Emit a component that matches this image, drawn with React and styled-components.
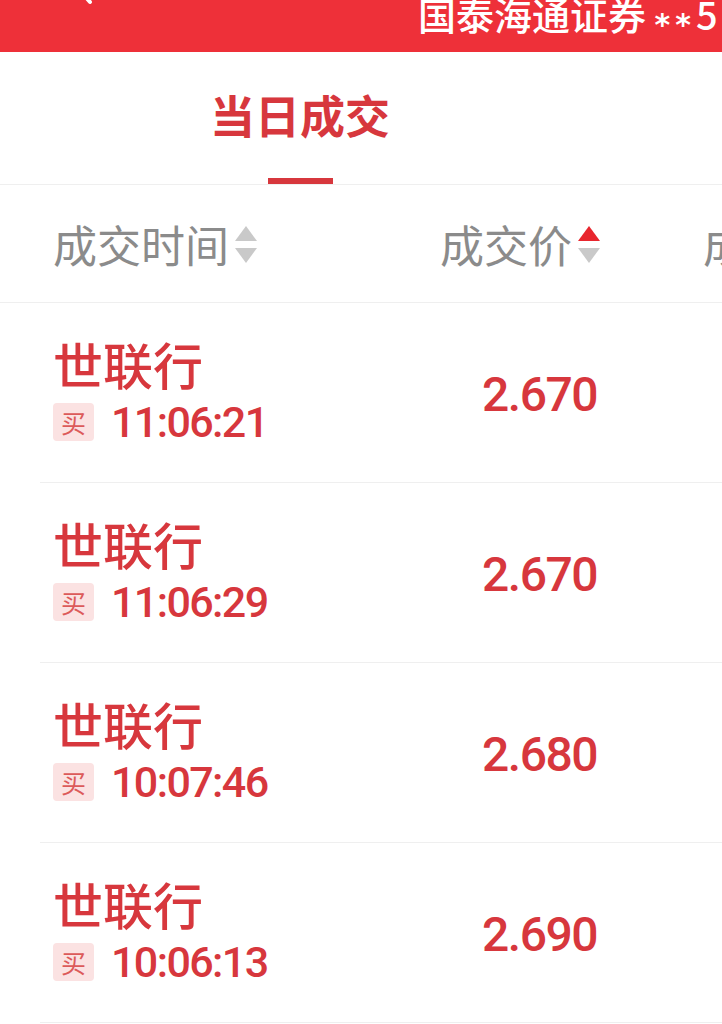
import React from 'react';
import styled, { createGlobalStyle } from 'styled-components';

const GlobalStyle = createGlobalStyle`
  html, body {
    margin: 0;
    padding: 0;
    background: #ffffff;
  }
  body {
    font-family: "Noto Sans CJK SC", "Noto Sans", sans-serif;
  }
`;

const trades = [
  { name: '世联行', side: '买', time: '11:06:21', price: '2.670' },
  { name: '世联行', side: '买', time: '11:06:29', price: '2.670' },
  { name: '世联行', side: '买', time: '10:07:46', price: '2.680' },
  { name: '世联行', side: '买', time: '10:06:13', price: '2.690' },
];

const App = () => {
  return (
    <Page>
      <GlobalStyle />
      <TopBar>
        <Back viewBox="0 0 30 50" width="30" height="50">
          <path d="M24 4 L6 25 L24 46" fill="none" stroke="#fff" strokeWidth="4" strokeLinecap="round" strokeLinejoin="round" />
        </Back>
        <Account>
          国泰海通证券 <Mask>**</Mask>5
        </Account>
      </TopBar>

      <Tabs>
        <Tab active>当日成交</Tab>
      </Tabs>

      <HeadRow>
        <HeadCell width="335px">
          成交时间
          <Sort />
        </HeadCell>
        <HeadCell width="212px" end>
          成交价
          <Sort dir="up" />
        </HeadCell>
        <HeadCell gap="103px">成交量</HeadCell>
      </HeadRow>

      <List>
        {trades.map((t, i) => (
          <Row key={i}>
            <NameCell>
              <Name>{t.name}</Name>
              <TimeLine>
                <Badge>{t.side}</Badge>
                <Time>{t.time}</Time>
              </TimeLine>
            </NameCell>
            <Price>{t.price}</Price>
          </Row>
        ))}
      </List>
    </Page>
  );
};

const Sort = ({ dir }) => (
  <SortBox>
    <Up on={dir === 'up' ? 1 : 0} />
    <Down on={dir === 'down' ? 1 : 0} />
  </SortBox>
);

const Page = styled.div`
  width: 722px;
  height: 1024px;
  overflow: hidden;
  background: #fff;
`;

const TopBar = styled.div`
  height: 52px;
  background: #ee3039;
  display: flex;
  align-items: flex-start;
  overflow: hidden;
  white-space: nowrap;
`;

const Back = styled.svg`
  flex: none;
  margin-left: 66px;
  margin-top: -44px;
`;

const Account = styled.div`
  margin-left: 322px;
  margin-top: -5px;
  font-size: 38px;
  line-height: 38px;
  color: #fff;
  font-weight: 500;
`;

const Mask = styled.span`
  display: inline-block;
  font-family: "DejaVu Sans", sans-serif;
  font-size: 30px;
  font-weight: 700;
  letter-spacing: 5px;
  vertical-align: -5px;
`;

const Tabs = styled.div`
  height: 132px;
  display: flex;
  border-bottom: 1px solid #efefef;
`;

const Tab = styled.div`
  width: 600px;
  display: flex;
  flex-direction: column;
  align-items: center;
  justify-content: flex-end;
  font-size: 45px;
  font-weight: 700;
  line-height: 1;
  color: ${p => (p.active ? '#d7373d' : '#333')};

  &::after {
    content: '';
    display: block;
    width: 65px;
    height: 6px;
    margin-top: 41px;
    background: ${p => (p.active ? '#d7373d' : 'transparent')};
  }
`;

const HeadRow = styled.div`
  height: 117px;
  padding-left: 53px;
  display: flex;
  align-items: center;
  border-bottom: 1px solid #efefef;
  white-space: nowrap;
`;

const HeadCell = styled.div`
  flex: none;
  width: ${p => p.width || 'auto'};
  margin-left: ${p => p.gap || '0'};
  display: flex;
  align-items: center;
  justify-content: ${p => (p.end ? 'flex-end' : 'flex-start')};
  font-size: 44px;
  line-height: 1;
  color: #8b8b8b;
`;

const SortBox = styled.span`
  display: inline-flex;
  flex-direction: column;
  gap: 7px;
  margin-left: 6px;
  margin-top: 2px;
`;

const Up = styled.span`
  width: 0;
  height: 0;
  border-left: 11px solid transparent;
  border-right: 11px solid transparent;
  border-bottom: 15px solid ${p => (p.on ? '#e8262e' : '#c9c9c9')};
`;

const Down = styled.span`
  width: 0;
  height: 0;
  border-left: 11px solid transparent;
  border-right: 11px solid transparent;
  border-top: 15px solid ${p => (p.on ? '#e8262e' : '#c9c9c9')};
`;

const List = styled.div`
  display: flex;
  flex-direction: column;
`;

const Row = styled.div`
  height: 179px;
  margin-left: 40px;
  padding-left: 13px;
  display: flex;
  align-items: center;
  border-bottom: 1px solid #efefef;
`;

const NameCell = styled.div`
  width: 335px;
  display: flex;
  flex-direction: column;
`;

const Name = styled.div`
  font-size: 50px;
  line-height: 58px;
  font-weight: 500;
  color: #d7373d;
`;

const TimeLine = styled.div`
  height: 60px;
  display: flex;
  align-items: center;
`;

const Badge = styled.span`
  width: 41px;
  height: 38px;
  border-radius: 4px;
  background: #fbe2e2;
  color: #dc5a5a;
  font-size: 25px;
  line-height: 38px;
  text-align: center;
`;

const Time = styled.span`
  margin-left: 17px;
  font-family: Roboto, "Noto Sans", sans-serif;
  font-size: 43px;
  font-weight: 500;
  letter-spacing: -1.6px;
  color: #d7373d;
`;

const Price = styled.div`
  width: 209px;
  text-align: right;
  font-family: Roboto, "Noto Sans", sans-serif;
  font-size: 48px;
  font-weight: 500;
  letter-spacing: -1.5px;
  color: #d7373d;
  margin-top: 4px;
`;

export default App;
